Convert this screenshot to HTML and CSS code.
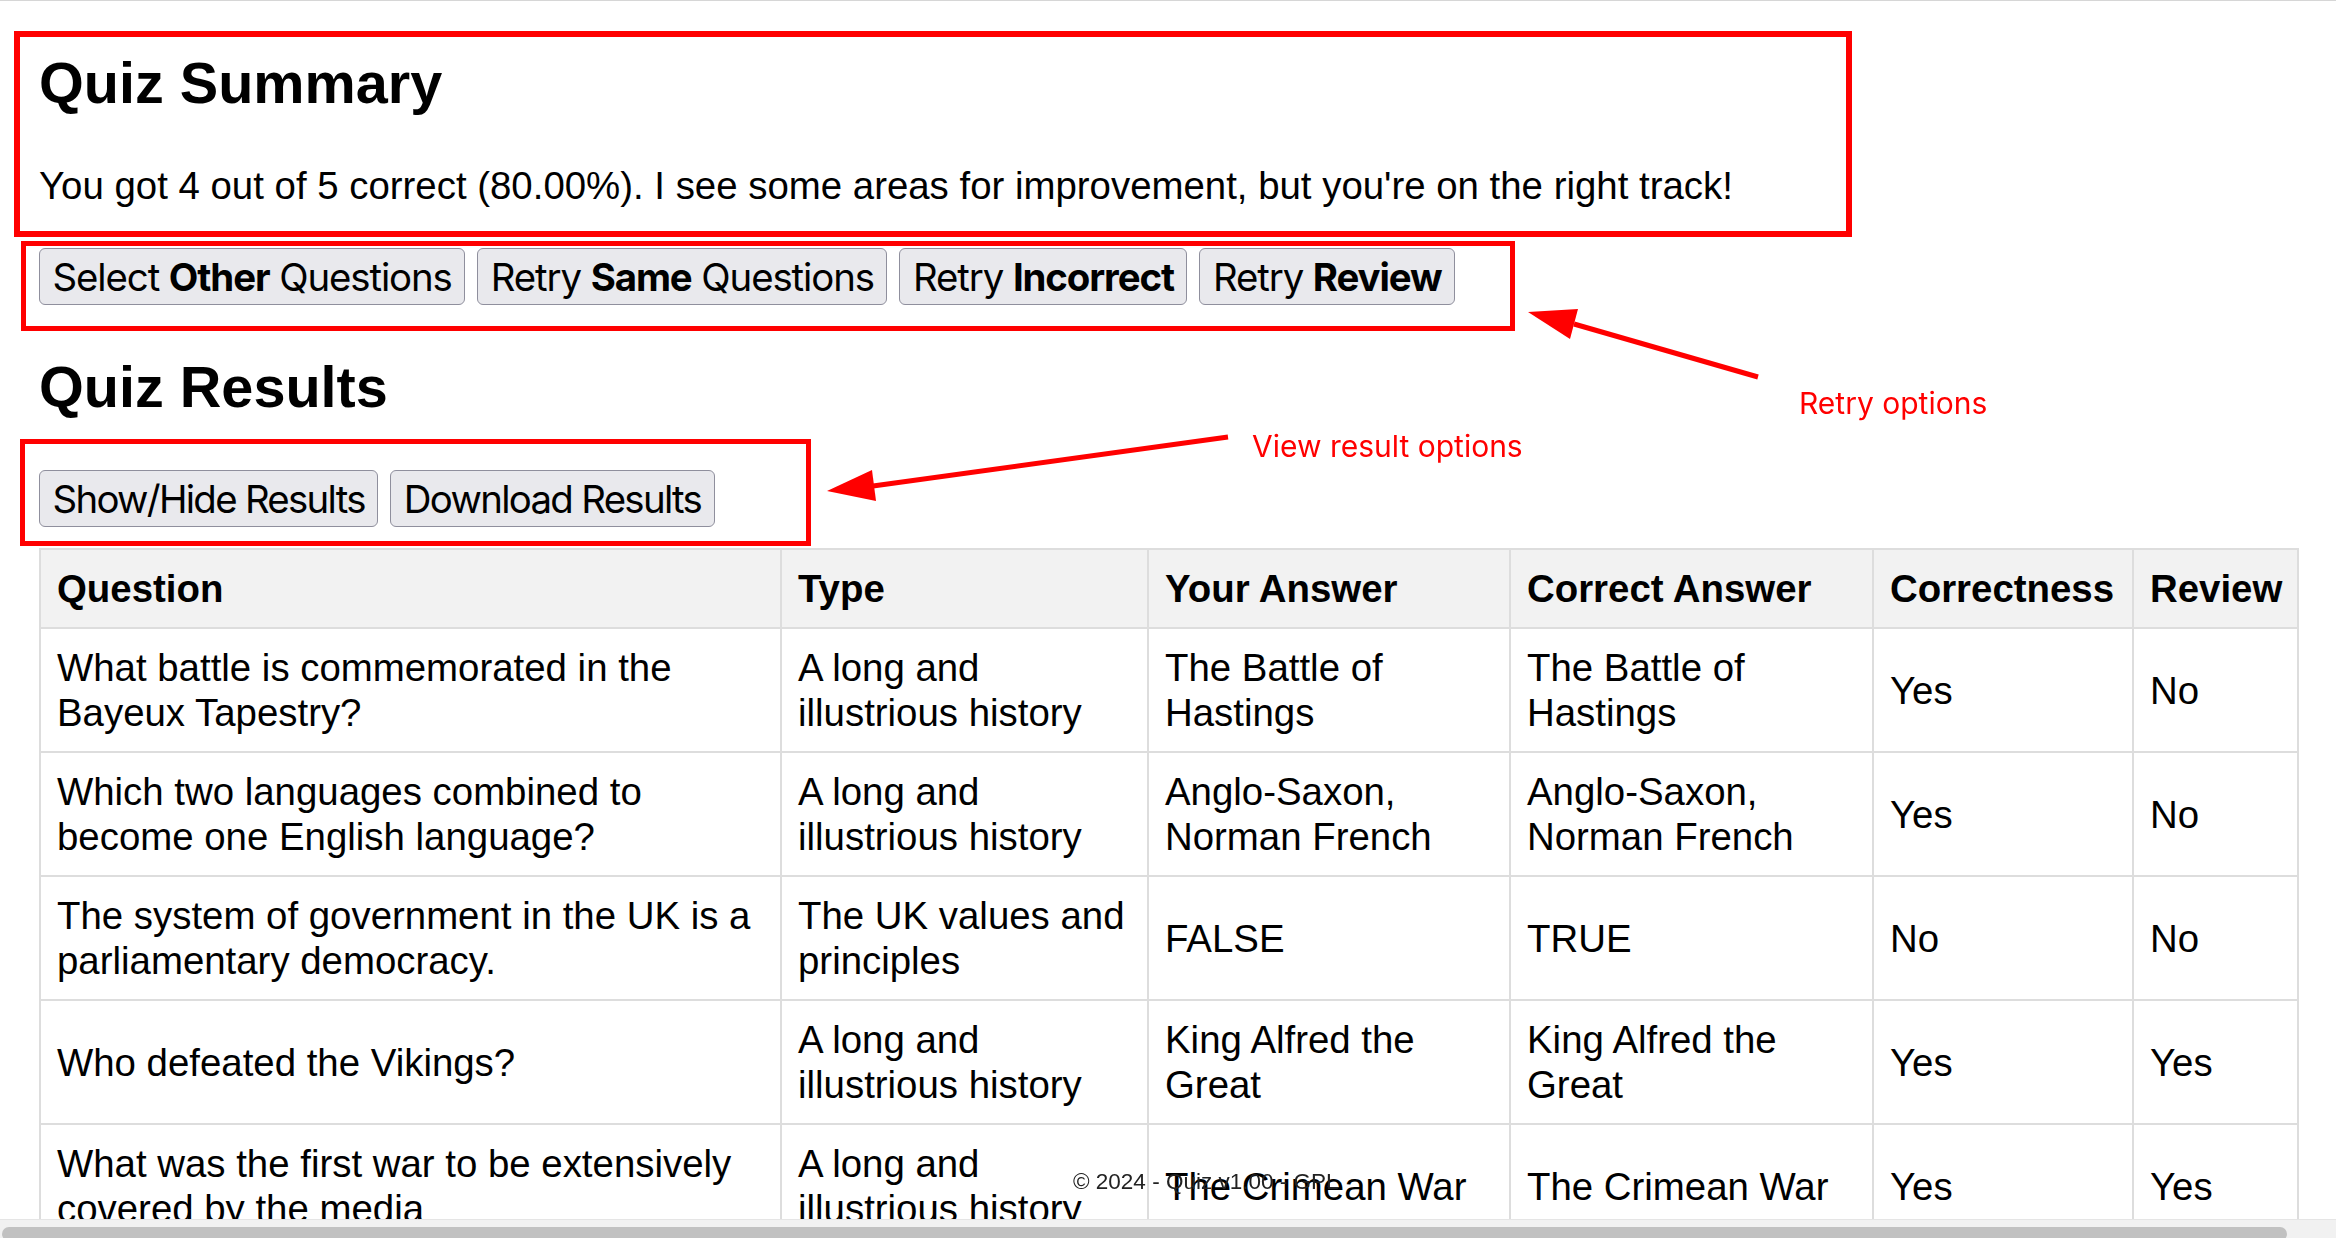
FILE: index.html
```html
<!DOCTYPE html>
<html lang="en">
<head>
<meta charset="utf-8">
<title>Quiz Summary</title>
<link rel="stylesheet" href="styles.css">
</head>
<body>
<section class="summary">
  <h2>Quiz Summary</h2>
  <p class="summary-text">You got 4 out of 5 correct (80.00%). I see some areas for improvement, but you're on the right track!</p>
</section>
<div class="btn-row retry">
  <button class="btn">Select <b>Other</b> Questions</button>
  <button class="btn">Retry <b>Same</b> Questions</button>
  <button class="btn">Retry <b>Incorrect</b></button>
  <button class="btn">Retry <b>Review</b></button>
</div>
<h2 class="results">Quiz Results</h2>
<div class="btn-row view">
  <button class="btn">Show/Hide Results</button>
  <button class="btn">Download Results</button>
</div>
<table class="results-table">
  <colgroup>
    <col class="c-q"><col class="c-type"><col class="c-ans"><col class="c-correct"><col class="c-ok"><col class="c-rev">
  </colgroup>
  <thead>
    <tr><th>Question</th><th>Type</th><th>Your Answer</th><th>Correct Answer</th><th>Correctness</th><th>Review</th></tr>
  </thead>
  <tbody>
    <tr><td>What battle is commemorated in the Bayeux Tapestry?</td><td>A long and illustrious history</td><td>The Battle of Hastings</td><td>The Battle of Hastings</td><td>Yes</td><td>No</td></tr>
    <tr><td>Which two languages combined to become one English language?</td><td>A long and illustrious history</td><td>Anglo-Saxon, Norman French</td><td>Anglo-Saxon, Norman French</td><td>Yes</td><td>No</td></tr>
    <tr><td>The system of government in the UK is a parliamentary democracy.</td><td>The UK values and principles</td><td>FALSE</td><td>TRUE</td><td>No</td><td>No</td></tr>
    <tr><td>Who defeated the Vikings?</td><td>A long and illustrious history</td><td>King Alfred the Great</td><td>King Alfred the Great</td><td>Yes</td><td>Yes</td></tr>
    <tr><td>What was the first war to be extensively covered by the media</td><td>A long and illustrious history</td><td>The Crimean War</td><td>The Crimean War</td><td>Yes</td><td>Yes</td></tr>
  </tbody>
</table>

<footer class="footer">© 2024 - Quiz v1.00 - GPL</footer>

<div class="annot">
  <div class="box box-summary"></div>
  <div class="box box-retry"></div>
  <div class="box box-view"></div>
  <svg class="arrows" width="2336" height="1238" viewBox="0 0 2336 1238" xmlns="http://www.w3.org/2000/svg">
    <line x1="1574" y1="324" x2="1758" y2="377" stroke="#ff0000" stroke-width="5"/>
    <polygon points="1528,312 1578,309 1570,339" fill="#ff0000"/>
    <line x1="873" y1="486" x2="1228" y2="437" stroke="#ff0000" stroke-width="5"/>
    <polygon points="827,491 872,470 876,501" fill="#ff0000"/>
    <text class="note" x="1799" y="414">Retry options</text>
    <text class="note" x="1252" y="457">View result options</text>
  </svg>
</div>

<div class="hscroll"><div class="thumb"></div></div>
</body>
</html>
```
FILE: styles.css
```css
html {
  overflow: hidden;
  background: #fff;
}
body {
  margin: 0;
  padding: 0 39px;
  border-top: 1px solid #d6d6d6;
  font-family: "Liberation Sans", Arial, sans-serif;
  font-size: 38.4px;
  color: #000;
  background: #fff;
}
h2 {
  font-size: 57.6px;
  line-height: 66px;
  font-weight: bold;
  margin: 49px 0 0;
}
.summary-text {
  margin: 48px 0 0;
  line-height: 44px;
}
.btn-row {
  display: flex;
  gap: 12px;
  margin-top: 40px;
}
.btn-row.view {
  margin-top: 50px;
}
.btn {
  font-family: Inter, "Noto Sans", sans-serif;
  font-size: 38.4px;
  line-height: 46px;
  letter-spacing: -1.1px;
  padding: 4.5px 12.5px;
  border: 1.5px solid #8f8f9d;
  border-radius: 6px;
  background: #e9e9ed;
  color: #000;
}
.view .btn {
  letter-spacing: -1.7px;
}
.btn b {
  font-weight: 700;
}
.results-table {
  margin-top: 21px;
  width: 100%;
  border-collapse: collapse;
  table-layout: fixed;
  line-height: 45px;
}
.c-q { width: 741px; }
.c-type { width: 367px; }
.c-ans { width: 362px; }
.c-correct { width: 363px; }
.c-ok { width: 260px; }
.c-rev { width: 165px; }
.results-table th,
.results-table td {
  border: 2px solid #dddddd;
  padding: 16px;
  text-align: left;
  vertical-align: middle;
}
.results-table th {
  background: #f2f2f2;
  font-weight: bold;
}
.footer {
  position: fixed;
  left: 1073px;
  top: 1170px;
  font-family: "Liberation Sans", Arial, sans-serif;
  font-size: 22.5px;
  line-height: 24px;
  color: #222;
}
.annot {
  position: absolute;
  top: 0;
  left: 0;
  width: 2336px;
  height: 1238px;
  pointer-events: none;
}
.box {
  position: absolute;
  box-sizing: border-box;
  border: 5px solid #ff0000;
}
.box-summary { left: 14px; top: 31px; width: 1838px; height: 206px; border-width: 6px; }
.box-retry { left: 21px; top: 241px; width: 1494px; height: 90px; }
.box-view { left: 20px; top: 439px; width: 791px; height: 107px; }
.arrows {
  position: absolute;
  top: 0;
  left: 0;
}
.note {
  font-family: Inter, "Noto Sans", sans-serif;
  font-size: 30px;
  fill: #ff0000;
}
.hscroll {
  position: fixed;
  left: 0;
  right: 0;
  bottom: 0;
  height: 18px;
  background: #f1f1f1;
  border-top: 1px solid #e5e5e5;
  overflow: hidden;
}
.thumb {
  margin: 7px 0 0 2px;
  width: 2285px;
  height: 14px;
  border-radius: 7px;
  background: #c1c1c1;
}
```
